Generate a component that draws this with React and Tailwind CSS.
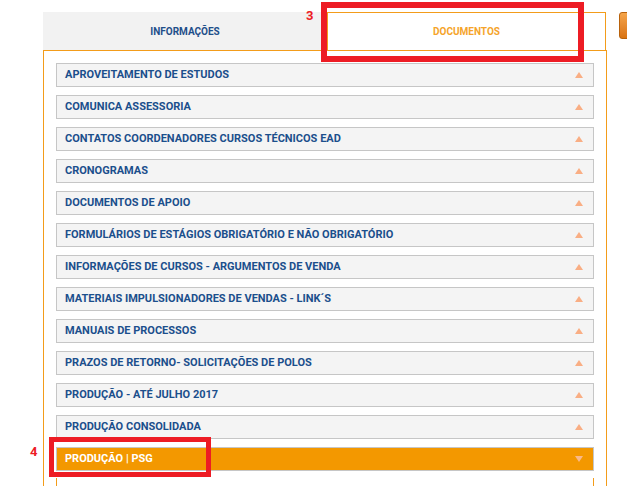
import { useState } from 'react'

const ITEMS = [
  'APROVEITAMENTO DE ESTUDOS',
  'COMUNICA ASSESSORIA',
  'CONTATOS COORDENADORES CURSOS TÉCNICOS EAD',
  'CRONOGRAMAS',
  'DOCUMENTOS DE APOIO',
  'FORMULÁRIOS DE ESTÁGIOS OBRIGATÓRIO E NÃO OBRIGATÓRIO',
  'INFORMAÇÕES DE CURSOS - ARGUMENTOS DE VENDA',
  'MATERIAIS IMPULSIONADORES DE VENDAS - LINK´S',
  'MANUAIS DE PROCESSOS',
  'PRAZOS DE RETORNO- SOLICITAÇÕES DE POLOS',
  'PRODUÇÃO - ATÉ JULHO 2017',
  'PRODUÇÃO CONSOLIDADA',
  'PRODUÇÃO | PSG',
]

function Arrow({ down }) {
  return (
    <svg width="8" height="6" viewBox="0 0 8 6" className="shrink-0">
      <path d={down ? 'M0 0h8L4 6z' : 'M4 0l4 6H0z'} fill={down ? '#f9b98a' : '#f9ae84'} />
    </svg>
  )
}

export default function App() {
  const [open, setOpen] = useState(12)

  return (
    <div className="relative h-[486px] w-[627px] overflow-hidden bg-white" style={{ fontFamily: 'Roboto, "Liberation Sans", sans-serif' }}>
      {/* orange button peeking at right */}
      <div className="absolute left-[619px] top-[12px] h-[27px] w-[20px] rounded-[3px] border border-[#b8620c] bg-gradient-to-b from-[#f5a54a] to-[#d9730f]" />

      <div className="ml-[43px] mt-[12px] w-[564px]">
        {/* tabs */}
        <div className="flex h-[38px]">
          <div className="flex w-[284px] items-center justify-center bg-[#f2f2f2] text-[10px] font-bold text-[#1f4f8a]">
            INFORMAÇÕES
          </div>
          <div className="flex w-[279px] items-center justify-center border-x border-t border-[#f39c1a] bg-white text-[10px] font-bold text-[#f5a42a]">
            DOCUMENTOS
          </div>
        </div>

        {/* panel */}
        <div className="flex flex-col gap-[8px] border border-[#f39c1a] px-[12px] pt-[12px] pb-[40px]">
          {ITEMS.map((label, i) => {
            const active = i === open
            return (
              <div key={label}>
                <button
                  onClick={() => setOpen(active ? -1 : i)}
                  className={`flex h-[24px] w-full items-center justify-between border pl-[8px] pr-[10px] text-left text-[11px] font-bold ${
                    active ? 'border-[#c6c6c6] bg-[#f39800] text-white' : 'border-[#c6c6c6] bg-[#f4f4f4] text-[#1b4f8c]'
                  }`}
                >
                  <span>{label}</span>
                  <Arrow down={active} />
                </button>
                {active && <div className="mt-[7px] h-[60px] border-x border-[#f39c1a]" />}
              </div>
            )
          })}
        </div>
      </div>

      {/* annotations */}
      <span className="absolute left-[306px] top-[6px] text-[13px] font-bold text-[#ed1c24]">3</span>
      <div className="absolute left-[321px] top-[2px] h-[60px] w-[263px] border-[6px] border-[#ed1c24]" />
      <span className="absolute left-[30px] top-[442px] text-[13px] font-bold text-[#ed1c24]">4</span>
      <div className="absolute left-[49px] top-[437px] h-[40px] w-[162px] border-[5px] border-[#ed1c24]" />
    </div>
  )
}
